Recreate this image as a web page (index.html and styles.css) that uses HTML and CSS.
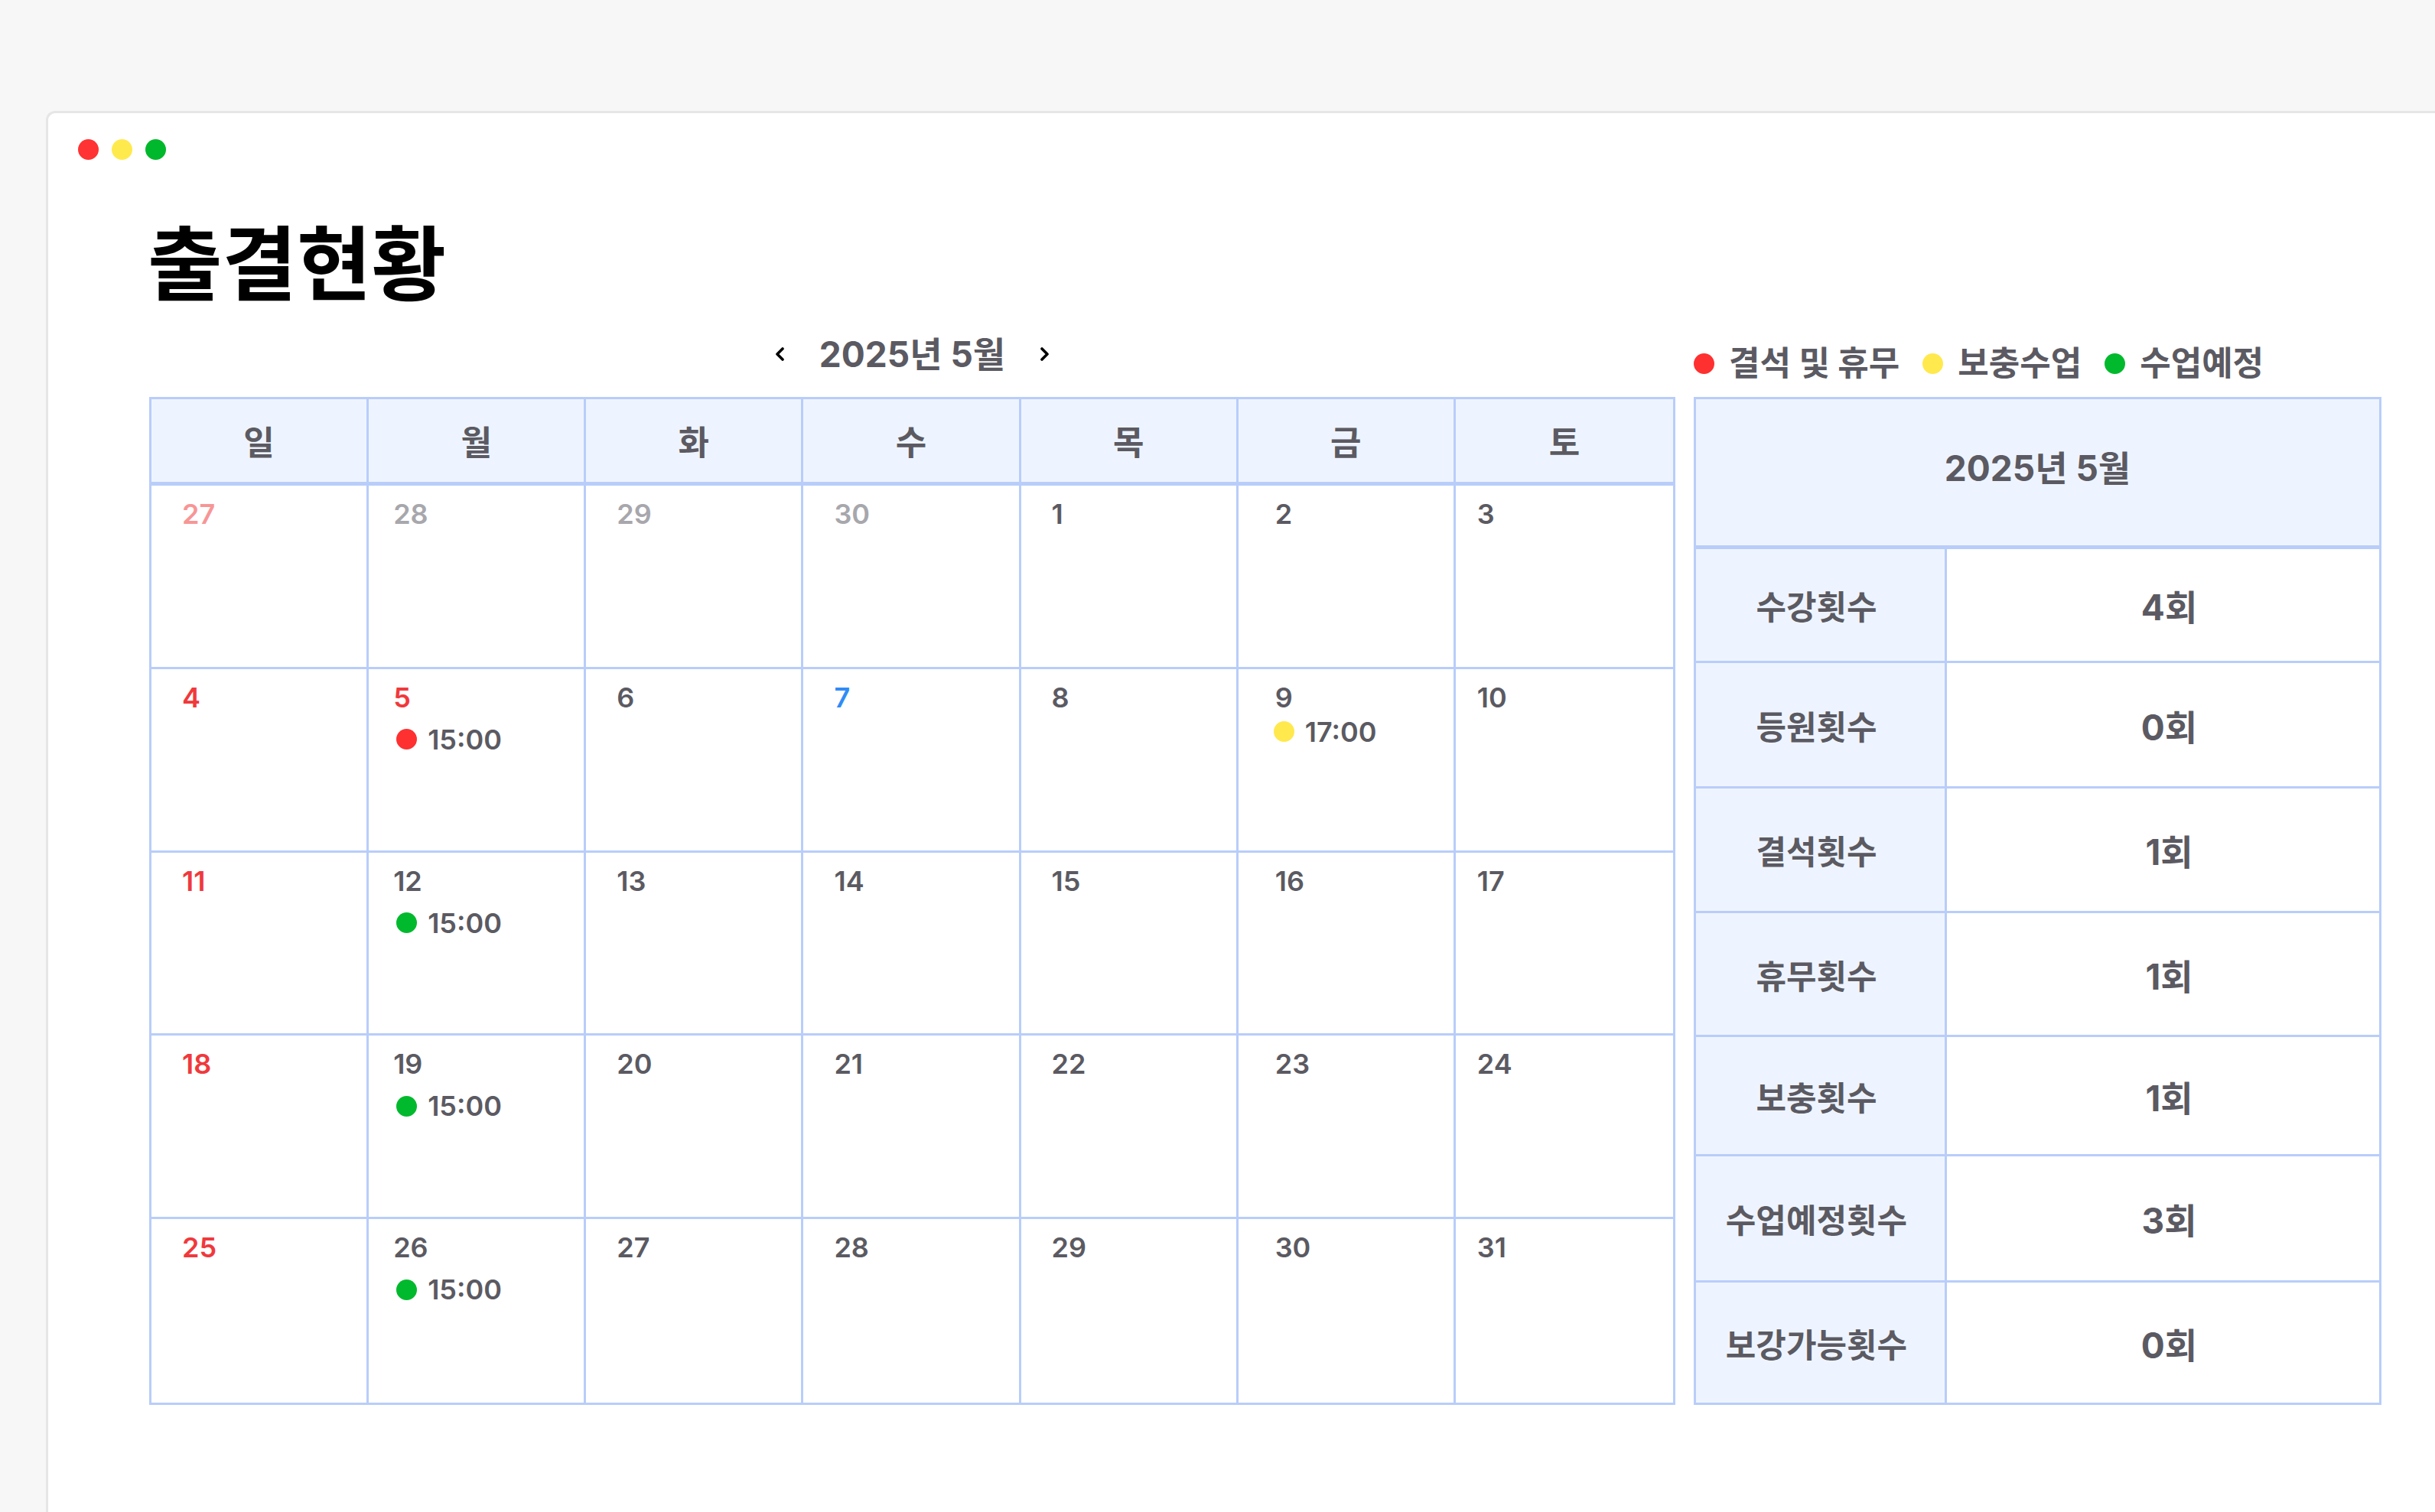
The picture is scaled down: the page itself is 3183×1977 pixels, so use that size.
FILE: index.html
```html
<!DOCTYPE html>
<html lang="ko">
<head>
    <meta charset="UTF-8">
    <meta name="viewport" content="width=device-width, initial-scale=1.0">
    <title>출결현황</title>
    <link rel="stylesheet" href="styles.css">
</head>
<body>
    <div class="window">
        <div class="lights">
            <span class="light light-red"></span>
            <span class="light light-yellow"></span>
            <span class="light light-green"></span>
        </div>

        <div class="content">
            <h1 class="title">출결현황</h1>

            <div class="board">
                <section class="cal-col">
                    <div class="topbar month-nav">
                        <button class="nav-btn" aria-label="이전 달">
                            <svg width="14" height="18" viewBox="0 0 14 18"><polyline points="10,2 3,9 10,16" fill="none" stroke="#000" stroke-width="3.6" stroke-linecap="round" stroke-linejoin="round"/></svg>
                        </button>
                        <span class="month-label">2025년 5월</span>
                        <button class="nav-btn" aria-label="다음 달">
                            <svg width="14" height="18" viewBox="0 0 14 18"><polyline points="4,2 11,9 4,16" fill="none" stroke="#000" stroke-width="3.6" stroke-linecap="round" stroke-linejoin="round"/></svg>
                        </button>
                    </div>

                    <div class="calendar">
                        <div class="weekdays">
                            <div>일</div>
                            <div>월</div>
                            <div>화</div>
                            <div>수</div>
                            <div>목</div>
                            <div>금</div>
                            <div>토</div>
                        </div>
                        <div class="days">
                            <div class="day"><span class="num prev-sun">27</span></div>
                            <div class="day"><span class="num prev">28</span></div>
                            <div class="day"><span class="num prev">29</span></div>
                            <div class="day"><span class="num prev">30</span></div>
                            <div class="day"><span class="num">1</span></div>
                            <div class="day"><span class="num">2</span></div>
                            <div class="day"><span class="num">3</span></div>

                            <div class="day"><span class="num sun">4</span></div>
                            <div class="day">
                                <span class="num sun">5</span>
                                <div class="event"><i class="dot dot-red"></i>15:00</div>
                            </div>
                            <div class="day"><span class="num">6</span></div>
                            <div class="day"><span class="num today">7</span></div>
                            <div class="day"><span class="num">8</span></div>
                            <div class="day">
                                <span class="num">9</span>
                                <div class="event event-tight"><i class="dot dot-yellow"></i>17:00</div>
                            </div>
                            <div class="day"><span class="num">10</span></div>

                            <div class="day"><span class="num sun">11</span></div>
                            <div class="day">
                                <span class="num">12</span>
                                <div class="event"><i class="dot dot-green"></i>15:00</div>
                            </div>
                            <div class="day"><span class="num">13</span></div>
                            <div class="day"><span class="num">14</span></div>
                            <div class="day"><span class="num">15</span></div>
                            <div class="day"><span class="num">16</span></div>
                            <div class="day"><span class="num">17</span></div>

                            <div class="day"><span class="num sun">18</span></div>
                            <div class="day">
                                <span class="num">19</span>
                                <div class="event"><i class="dot dot-green"></i>15:00</div>
                            </div>
                            <div class="day"><span class="num">20</span></div>
                            <div class="day"><span class="num">21</span></div>
                            <div class="day"><span class="num">22</span></div>
                            <div class="day"><span class="num">23</span></div>
                            <div class="day"><span class="num">24</span></div>

                            <div class="day"><span class="num sun">25</span></div>
                            <div class="day">
                                <span class="num">26</span>
                                <div class="event"><i class="dot dot-green"></i>15:00</div>
                            </div>
                            <div class="day"><span class="num">27</span></div>
                            <div class="day"><span class="num">28</span></div>
                            <div class="day"><span class="num">29</span></div>
                            <div class="day"><span class="num">30</span></div>
                            <div class="day"><span class="num">31</span></div>
                        </div>
                    </div>
                </section>

                <section class="side-col">
                    <div class="topbar legend">
                        <span class="legend-item"><i class="dot dot-red"></i>결석 및 휴무</span>
                        <span class="legend-item"><i class="dot dot-yellow"></i>보충수업</span>
                        <span class="legend-item"><i class="dot dot-green"></i>수업예정</span>
                    </div>

                    <div class="summary">
                        <div class="summary-head">2025년 5월</div>
                        <div class="summary-body">
                            <div class="label">수강횟수</div><div class="value">4회</div>
                            <div class="label">등원횟수</div><div class="value">0회</div>
                            <div class="label">결석횟수</div><div class="value">1회</div>
                            <div class="label">휴무횟수</div><div class="value">1회</div>
                            <div class="label">보충횟수</div><div class="value">1회</div>
                            <div class="label">수업예정횟수</div><div class="value">3회</div>
                            <div class="label">보강가능횟수</div><div class="value">0회</div>
                        </div>
                    </div>
                </section>
            </div>
        </div>
    </div>
</body>
</html>
```

FILE: styles.css
```css
* {
    box-sizing: border-box;
}

html, body {
    margin: 0;
    height: 100%;
}

body {
    background: #f7f7f7;
    font-family: "Inter", "Noto Sans CJK KR", sans-serif;
    color: #5b5a62;
    padding: 145px 0 0 60px;
    overflow: hidden;
}

.window {
    background: #fff;
    border: 3px solid #e6e6e6;
    border-right: none;
    border-bottom: none;
    border-top-left-radius: 12px;
    min-height: calc(100vh - 145px);
    padding: 34px 0 0 39px;
}

.lights {
    display: flex;
    gap: 17px;
}

.light {
    width: 27px;
    height: 27px;
    border-radius: 50%;
}

.light-red { background: #ff3333; }
.light-yellow { background: #ffea4d; }
.light-green { background: #00b82b; }

.content {
    padding-left: 93px;
}

.title {
    margin: 76px 0 0 -2px;
    font-family: "Noto Sans CJK KR", sans-serif;
    font-size: 106px;
    line-height: 1;
    font-weight: 700;
    color: #000;
}

.board {
    display: flex;
    gap: 24px;
    margin-top: 40px;
}

.cal-col {
    width: 1995px;
}

.side-col {
    width: 899px;
}

.topbar {
    height: 88px;
    display: flex;
    align-items: center;
}

/* month navigation */
.month-nav {
    justify-content: center;
    gap: 44px;
    padding-bottom: 24px;
}

.nav-btn {
    background: none;
    border: none;
    padding: 0;
    display: flex;
    cursor: pointer;
}

.month-label {
    font-size: 46px;
    font-weight: 700;
    line-height: 1;
}

/* legend */
.legend {
    gap: 30px;
}

.legend-item {
    display: flex;
    align-items: center;
    gap: 19px;
    font-size: 44px;
    font-weight: 700;
    line-height: 1;
}

.dot {
    display: inline-block;
    width: 27px;
    height: 27px;
    border-radius: 50%;
    flex-shrink: 0;
}

.dot-red { background: #ff3030; }
.dot-yellow { background: #ffe94d; }
.dot-green { background: #00b92d; }

/* calendar */
.calendar {
    border: 3px solid #b8cdfa;
}

.weekdays {
    display: grid;
    grid-template-columns: repeat(7, 1fr);
    height: 113px;
    background: #eef4ff;
    border-bottom: 5px solid #b8cdfa;
}

.weekdays div {
    display: flex;
    align-items: center;
    justify-content: center;
    font-size: 44px;
    font-weight: 700;
    border-right: 3px solid #b8cdfa;
}

.weekdays div:last-child {
    border-right: none;
}

.days {
    display: grid;
    grid-template-columns: repeat(7, 1fr);
    grid-template-rows: repeat(5, 1fr);
    height: 1199px;
}

.day {
    border-right: 3px solid #b8cdfa;
    border-bottom: 3px solid #b8cdfa;
    padding: 19px 0 0 40px;
}

.day:nth-child(7n+2) {
    padding-left: 32px;
}

.day:nth-child(7n) {
    border-right: none;
    padding-left: 28px;
}

.day:nth-child(7n+6) {
    padding-left: 48px;
}

.day:nth-last-child(-n+7) {
    border-bottom: none;
}

.num {
    display: block;
    font-size: 36px;
    font-weight: 600;
    line-height: 1;
}

.num.prev { color: #a7a7ac; }
.num.prev-sun { color: #f79696; }
.num.sun { color: #f0393c; }
.num.today { color: #2f8cf6; }

.event {
    display: flex;
    align-items: center;
    gap: 14px;
    margin-top: 19px;
    margin-left: 4px;
    font-size: 36px;
    font-weight: 600;
    line-height: 1;
}

.event-tight {
    margin-top: 9px;
    margin-left: -2px;
}

/* summary table */
.summary {
    border: 3px solid #b8cdfa;
}

.summary-head {
    height: 196px;
    display: flex;
    align-items: center;
    justify-content: center;
    padding-bottom: 18px;
    background: #eef4ff;
    border-bottom: 5px solid #b8cdfa;
    font-size: 46px;
    font-weight: 700;
}

.summary-body {
    display: grid;
    grid-template-columns: 328px 1fr;
    grid-template-rows: 149px 164px 163px 162px 156px 165px 157px;
}

.label, .value {
    display: flex;
    align-items: center;
    justify-content: center;
    border-bottom: 3px solid #b8cdfa;
    font-weight: 700;
}

.label {
    background: #eef4ff;
    border-right: 3px solid #b8cdfa;
    font-size: 43px;
    padding-right: 10px;
}

.value {
    font-size: 46px;
    padding-left: 16px;
}

.label:nth-last-child(2),
.value:last-child {
    border-bottom: none;
}
```
